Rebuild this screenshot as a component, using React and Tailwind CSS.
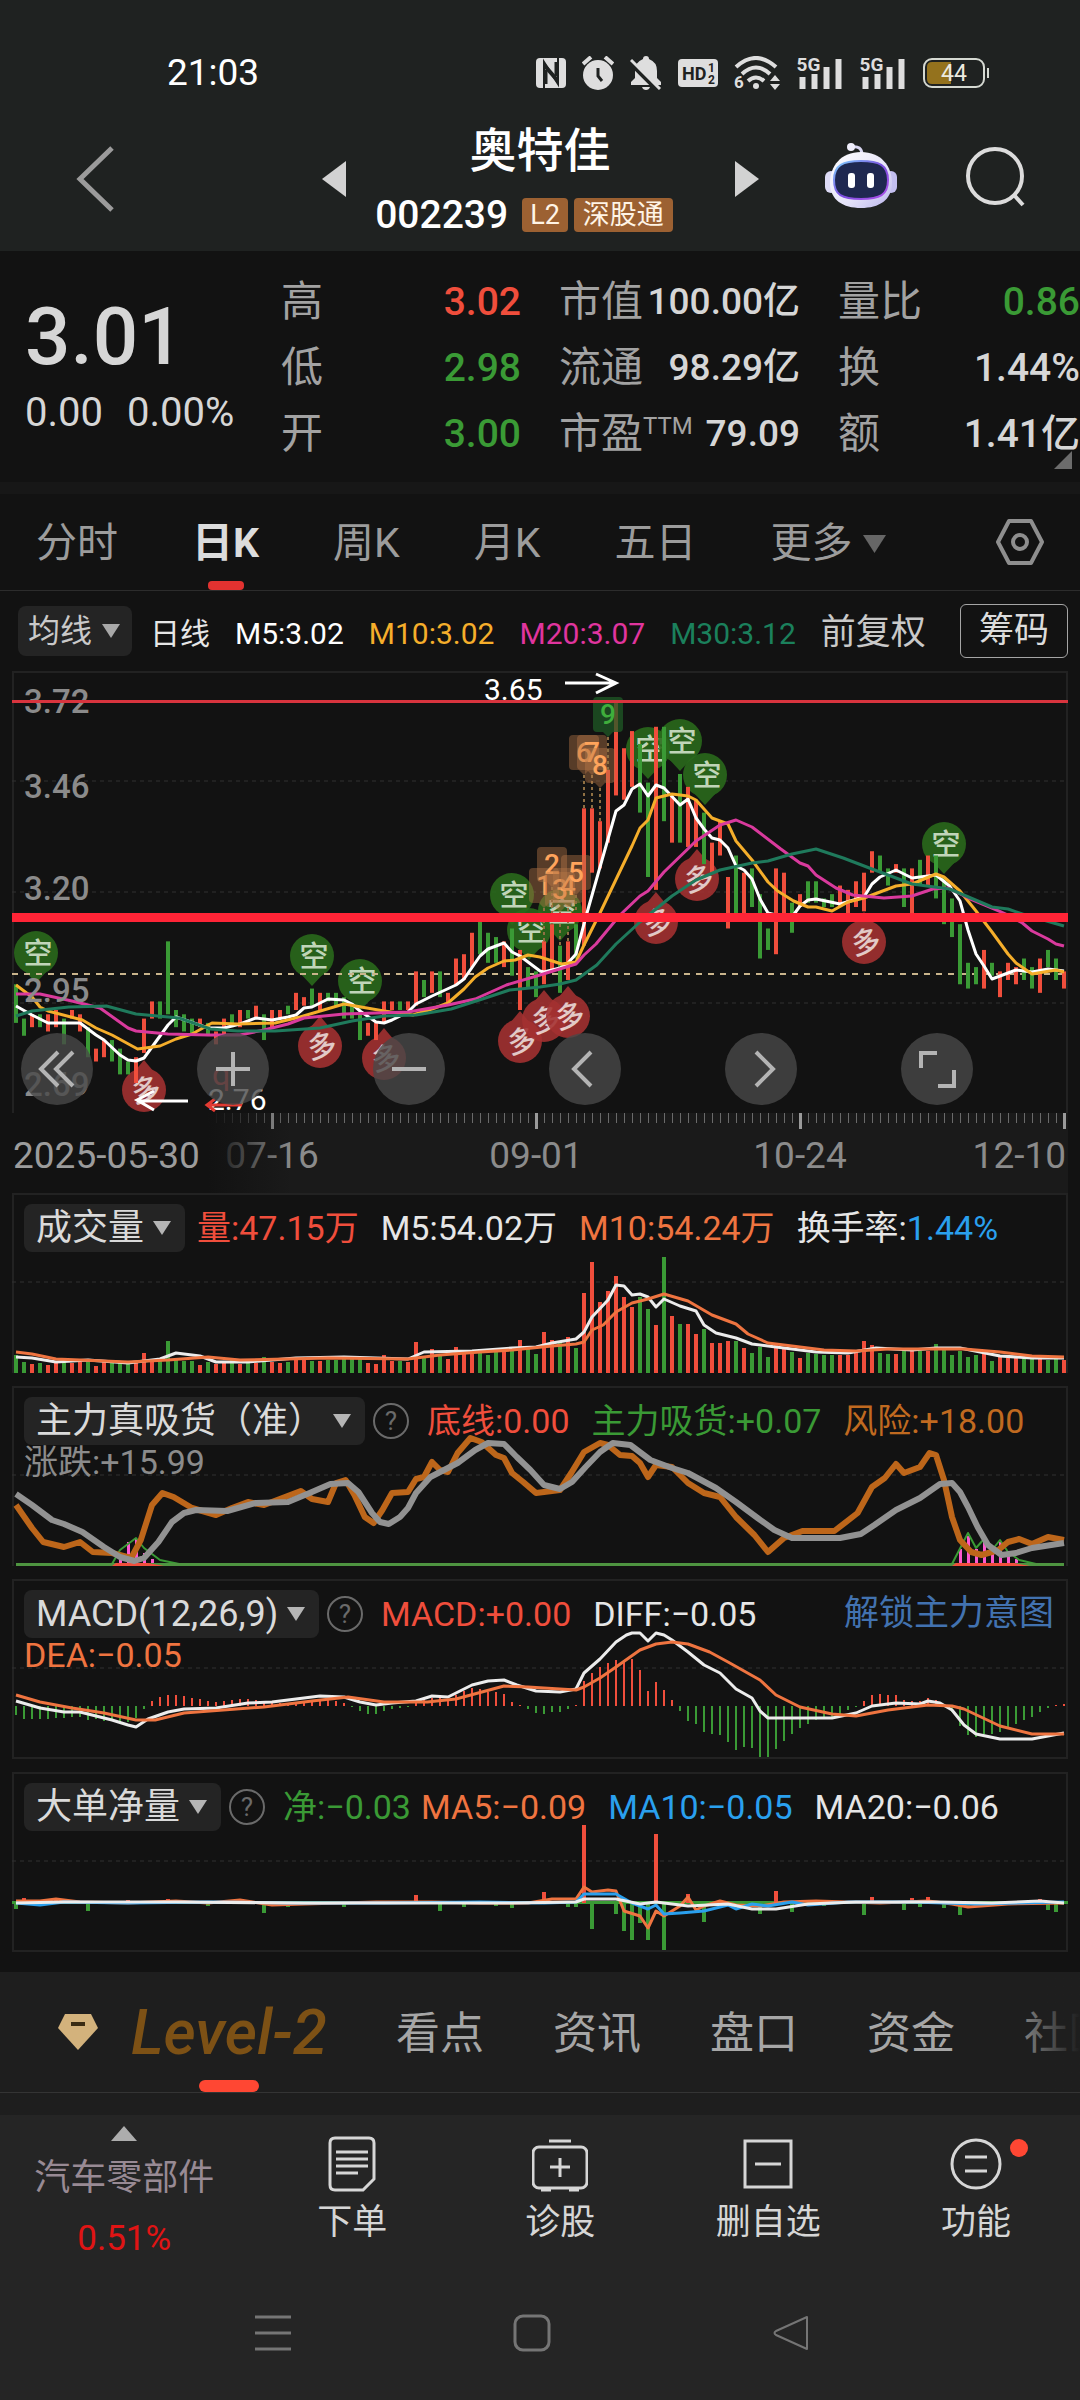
import React, { useState } from 'react';

const RED = '#f04e3c';
const GREEN = '#3a9a35';
const STEP = 8;

// direction, high, low (prices in cents)
const CANDLES = `
g299,290 g291,287 r292,289 g292,289 r292,288 r293,289 g291,285 r293,291 r292,288 g289,282
r284,281 r286,282 g286,281 g284,278 g281,278 r282,276 r291,283 r295,291 g295,291 g309,292
g293,289 g292,288 g291,287 r291,289 g290,287 r288,285 r291,287 g292,289 r293,289 g293,291
r294,291 g292,286 r293,289 r293,291 g294,292 r297,293 r296,294 g298,294 r297,293 g297,295
g297,294 g296,291 g294,291 g292,286 r290,287 r290,286 r295,290 r295,293 g295,293 r295,293
r302,294 g300,296 r302,297 g302,296 r297,294 r305,299 r306,300 r311,303 g315,306 g311,304
g310,304 r309,303 g312,301 r307,293 g303,298 g302,296 r309,299 r313,302 g308,297 r309,300
g313,305 r340,308 r340,325 r337,326 r349,332 r365,343 r354,342 r358,345 g355,339 g346,324
r359,321 g359,337 r343,332 g348,332 r345,331 r342,331 g339,327 r332,325 r337,329 r324,312
g329,315 r325,315 g326,317 g320,305 g312,307 r326,306 r325,315 g318,311 r320,317 g323,318
g323,318 g319,317 g320,317 r322,317 r321,315 r323,317 r325,316 r330,325 g329,325 g326,322
r327,325 g326,317 r326,315 g328,322 r329,322 g329,319 g324,313 g319,310 g313,299 g304,298
g303,299 r307,298 g304,301 r302,296 r304,300 r303,299 g305,300 g303,298 r305,297 g307,303
g305,300 r302,298`.trim().split(/\s+/).map(s => {
    const [high, low] = s.slice(1).split(',').map(Number);
    return { color: s[0] === 'r' ? RED : GREEN, high, low };
});

const VOLUMES = [
    18, 11, 9, 10, 8, 11, 11, 10, 11, 11, 7, 12, 10, 10, 10, 12, 20, 12, 13, 32,
    14, 12, 12, 8, 11, 9, 11, 13, 9, 10, 10, 16, 11, 10, 11, 15, 15, 12, 12, 13,
    13, 14, 15, 14, 10, 9, 18, 12, 12, 11, 31, 15, 24, 19, 14, 26, 23, 22, 20, 18,
    22, 23, 26, 33, 26, 19, 41, 33, 31, 36, 25, 80, 111, 71, 82, 97, 76, 66, 76, 64,
    48, 116, 57, 49, 49, 39, 44, 30, 30, 32, 32, 25, 20, 26, 16, 28, 24, 21, 15, 20,
    19, 18, 18, 18, 18, 23, 32, 28, 20, 19, 19, 22, 22, 22, 22, 29, 25, 18, 22, 16,
    18, 20, 12, 18, 15, 15, 16, 18, 14, 13, 14, 13,
];

const MACD = [
    -9, -13, -13, -13, -13, -12, -12, -11, -11, -14, -13, -15, -15, -17, -16, -12, -3, 5, 9, 11,
    11, 10, 8, 7, 5, 4, 5, 6, 7, 7, 6, 4, 4, 3, 3, 4, 5, 6, 7, 7,
    5, 3, -1, -5, -8, -8, -5, -3, -2, -1, 4, 7, 8, 8, 7, 11, 15, 18, 17, 14,
    14, 12, 4, 1, -3, -7, -8, -6, -6, -3, 1, 25, 33, 39, 43, 46, 46, 47, 36, 15,
    24, 16, 6, -5, -15, -18, -26, -28, -29, -36, -44, -41, -42, -51, -52, -43, -35, -28, -22, -18,
    -14, -12, -12, -8, -4, -1, 5, 11, 12, 11, 11, 6, 5, 5, 8, 6, 0, -6, -20, -29,
    -31, -28, -28, -26, -22, -18, -14, -11, -6, -2, 1, 2,
];

// bar index -> net flow, bars that are not listed stay near zero
const NET = {
    0: -6, 1: 5, 5: 4, 9: -8, 14: 3, 19: 4, 24: -3, 28: 4, 31: -10, 34: -4, 41: -4, 50: 8, 53: -8, 56: -4,
    60: -3, 62: -5, 66: 11, 69: -4, 70: -4, 71: 78, 72: -26, 75: -11, 76: -28, 77: -37, 78: -20, 79: -37,
    80: 69, 81: -48, 84: 9, 86: -19, 88: 3, 93: -11, 95: 12, 97: -9, 101: -3, 106: -12, 107: 6, 111: -7,
    112: 5, 113: -4, 114: 6, 116: -5, 118: -12, 119: -5, 121: -4, 123: -3, 128: 4, 129: -7, 130: -9,
};

const px = i => 4 + STEP * i;
const py = cents => (372 - cents) * 442 / 103;

const Line = ({ pts, color, width = 3 }) => (
    <polyline
        points={pts.trim().split(/\s+/).map(p => {
            const [i, y] = p.split(',').map(Number);
            return `${px(i)},${y}`;
        }).join(' ')}
        fill="none"
        stroke={color}
        strokeWidth={width}
        strokeLinejoin="round"
    />
);

const Grid = ({ y }) => <line x1="0" x2="1056" y1={y} y2={y} stroke="#303030" strokeWidth="1" strokeDasharray="4 4" />;

const Caret = ({ className }) => (
    <svg viewBox="0 0 18 14" className={className} fill="currentColor"><path d="M0 0h18l-9 14z" /></svg>
);

const Pin = ({ x, y, up }) => (
    <g opacity="0.88">
        <circle cx={x} cy={y} r="22" fill={up ? '#a53131' : '#2a6b1c'} />
        <path
            d={up ? `M${x - 10} ${y - 18}L${x} ${y - 30}L${x + 10} ${y - 18}z` : `M${x - 12} ${y + 17}L${x} ${y + 30}L${x + 12} ${y + 17}z`}
            fill={up ? '#a53131' : '#2a6b1c'}
        />
        <text
            x={x + 2}
            y={y + 11}
            fontSize="29"
            fontWeight="500"
            textAnchor="middle"
            fill={up ? '#ffe3e0' : '#d8f0d0'}
            transform={up ? `rotate(-12 ${x} ${y})` : undefined}
        >
            {up ? '多' : '空'}
        </text>
    </g>
);

const SHORT_PINS = [[24, 282], [300, 285], [348, 310], [500, 224], [517, 259], [548, 240], [636, 78], [668, 70], [693, 104], [932, 173]];
const LONG_PINS = [[132, 419], [308, 375], [372, 387], [508, 370], [532, 349], [556, 345], [644, 251], [685, 208], [852, 271]];
// label, bar index, top
const COUNTS = [['1', 66, 197], ['2', 67, 176], ['3', 68, 201], ['4', 69, 197], ['5', 70, 184], ['6', 71, 64], ['7', 72, 64], ['8', 73, 77], ['9', 74, 26]];

const KChart = () => (
    <svg viewBox="0 0 1056 442" className="block w-full">
        <Grid y={110} />
        <Grid y={221} />
        <Grid y={332} />
        {SHORT_PINS.map(([x, y]) => <Pin key={x} x={x} y={y} />)}
        {LONG_PINS.map(([x, y]) => <Pin key={x} x={x} y={y} up />)}
        <line x1="0" x2="1056" y1="303" y2="303" stroke="#c9b48c" strokeWidth="2" strokeDasharray="6 6" />
        {CANDLES.map((c, i) => (
            <rect key={i} x={px(i) - 2} y={py(c.high)} width="4" height={py(c.low) - py(c.high)} fill={c.color} />
        ))}
        {COUNTS.map(([n, i, y]) => (
            <g key={n}>
                <line x1={px(i)} x2={px(i)} y1={y + 40} y2={Math.max(py(CANDLES[i].high), y + 40)} stroke="#8f7043" strokeWidth="2" strokeDasharray="3 3" />
                <path
                    d={`M${px(i) - 11} ${y}h22q4 0 4 4v27q0 4 -4 4h-6l-5 5l-5 -5h-6q-4 0 -4 -4v-27q0 -4 4 -4z`}
                    fill={n === '9' ? '#1f5a25' : '#b87848'}
                    opacity={n === '9' ? 0.75 : 0.42}
                />
                <text x={px(i)} y={y + 27} fontSize="28" fontWeight="500" textAnchor="middle" fill={n === '9' ? '#3fae3c' : '#ffa45c'}>{n}</text>
            </g>
        ))}
        <Line color="#ffffff" pts="0,335 2,344 4,352 8,352 10,364 11,369 13,384 14,389 15,390 16,387 17,376 19,354 20,346 21.5,350 24,357 26,357 28,353 30,347 32,349 34,346 35,344 36,337 37,336 39,328 41,329 42,333 43,340 45,351 46,352 47,349 49,341 50,333 52,325 55,314 56,308 58,285 59,278 61,272 62,281 63,285 65.5,300 66,301 67,299 68,297 69,292 70,283 71.3,244 73,196 75,140 76,134 77,118 78,113 79,125 80,114 81,117 83,134 84,128 85,147 86,158 87,167 88,169 89,177 90,195 91,199 92,208 93,228 94,242 95,244 97,246 98,235 99,229 100,228 103,233 106,226 107,213 108,206 110,199 112,207 115,204 116.7,215 118,230 119,259 120,283 121,295 122,308 125,299 127,301 129,298 131,300" />
        <Line color="#f5ae2b" pts="0,314 2,326 3,336 4,340 8.3,349 10,357 12,364 15.2,378 18,375 20,368 22,363 24.5,352 27.7,353 32.4,352 35.5,346 41,333 46,340 49.6,344 52,338 54,332 56,318 57.4,306 59,297 61,290 62.4,289 64,284 65.5,286 68.2,293 70,291 71,274 73,242 77,175 78,157 79,149 80,127 82,123 84,125 85,129 87,147 89,153 90,170 92,189 94,211 95.2,220 97.2,230 99,236 100,236 102,240 104,231 106,227 110,215 112,213 115,203 116,206 118,220 120,240 122,261 124,283 125,292 127,303 130,299 131,301" />
        <Line color="#d93a9d" pts="0,323 3,323 7,330 10.5,337 14,357 15,360 19,363 24,364 28,364 31,359 34,353 36,347 41,343 49,341 54,334 57.4,328 61.3,314 65.5,304 70,293 71,284 72.5,273 75.5,244 78,225 79,220 81,201 85,170 88,154 90,149 92,156 95.6,178 98,192 99,195 100,204 102.5,217 104.6,224 108.5,227 112,225 114.6,218 116.5,217 119.3,228 122,237 124,244 125.8,252 127,260 129,268 130,273 131,275" />
        <Line color="#1f7a5c" pts="0,345 2,340 6.6,336 11.3,335 15,343 20.4,347 24.3,358 27.7,360 32.4,360 38,357 42,350 46,345 50,344 54.4,338 58.3,328 61.7,319 65.5,316 68,313 70,309 72.6,294 75,273 78,251 82,225 85,209 88,199 92,192 94,190 97,183 100,178 103.4,187 107,198 110,207 112,213 116.7,218 122,236 124,238 125.8,243 131,255" />
        <g fill="#8b8b8b" fontSize="33" fontWeight="500">
            <text x="12" y="42">3.72</text>
            <text x="12" y="127">3.46</text>
            <text x="12" y="229">3.20</text>
            <text x="12" y="331">2.95</text>
            <text x="12" y="425">2.69</text>
        </g>
        <text x="472" y="29" fontSize="30" fill="#fff">3.65</text>
        <path d="M553 12H603M584 3l20 9l-20 10" fill="none" stroke="#fff" strokeWidth="3" />
        <text x="196" y="439" fontSize="30" fill="#fff">2.76</text>
        <text x="200" y="414" fontSize="32" fill="#d03030">q</text>
        <path d="M176 430H126M142 420l-17 9l17 10" fill="none" stroke="#fff" strokeWidth="3" />
        <path d="M230 434H196M203 428l-8 6l8 6" fill="none" stroke="#e23b33" strokeWidth="3" />
        <rect x="0" y="29" width="1056" height="3" fill="#d8343e" />
        <rect x="0" y="242" width="1056" height="9" fill="#ff2436" />
    </svg>
);

const CONTROLS = [
    ['快退', 'M35 17L18 34L35 51M50 17L33 34L50 51'],
    ['放大', 'M17 34H51M34 17V51'],
    ['缩小', 'M17 34H51'],
    ['左移', 'M40 17L23 34L40 51'],
    ['右移', 'M29 17L46 34L29 51'],
    ['全屏', 'M18 33V18H34M51 35V51H35'],
];

const TimeAxis = () => (
    <svg viewBox="0 0 1056 80" className="block w-full bg-[#1a1a1a]">
        <defs>
            <linearGradient id="fade">
                <stop offset="0.7" stopColor="#121212" />
                <stop offset="1" stopColor="#121212" stopOpacity="0" />
            </linearGradient>
        </defs>
        {CANDLES.map((_, i) => (
            i % 33 === 32
                ? <rect key={i} x={px(i) - 1} y="0" width="3" height="16" fill="#9a9a9a" />
                : <rect key={i} x={px(i)} y="0" width="1" height="10" fill="#6a6a6a" />
        ))}
        <g fill="#8b8b8b" fontSize="37">
            <text x="260" y="55" textAnchor="middle">07-16</text>
            <text x="524" y="55" textAnchor="middle">09-01</text>
            <text x="788" y="55" textAnchor="middle">10-24</text>
            <text x="1054" y="55" textAnchor="end">12-10</text>
        </g>
        <rect x="0" y="0" width="280" height="80" fill="url(#fade)" />
        <text x="1" y="55" fontSize="37" fill="#9c9c9c">2025-05-30</text>
    </svg>
);

const Picker = ({ label, value }) => (
    <label className="relative flex shrink-0 items-center rounded-lg bg-[#242424] text-[#dadada]">
        <span className="sr-only">{label}</span>
        <select className="h-12 appearance-none bg-transparent pl-3 pr-10 text-[36px] leading-[48px] outline-none">
            <option>{value}</option>
        </select>
        <Caret className="pointer-events-none absolute right-[14px] h-[14px] w-[18px] text-[#b5b5b5]" />
    </label>
);

const Help = () => (
    <button aria-label="指标说明" className="ml-2 h-9 w-9 shrink-0 rounded-full border-2 border-[#6a6a6a] text-[26px] leading-8 text-[#6a6a6a]">?</button>
);

const Panel = ({ label, value, help, items, extra, link, children }) => (
    <section className="relative mb-[13px] h-[180px] border-x-2 border-t-2 border-[#222]">
        <div className="absolute -inset-x-[2px] -top-[2px]">
            <svg viewBox="0 0 1056 180" className="block w-full">
                <Grid y={89} />
                {children}
            </svg>
        </div>
        <div className="relative flex items-center whitespace-nowrap pl-[10px] pr-3 pt-[9px] text-[34px] leading-[48px]">
            <Picker label={label} value={value} />
            {help && <Help />}
            <div className={help ? 'ml-[18px] flex gap-[22px]' : 'ml-3 flex gap-[22px]'}>
                {items}
            </div>
            {link && <a href="#unlock" className="ml-auto text-[35px] text-[#4272b0]">{link}</a>}
        </div>
        {extra && <div className="relative pl-[10px] text-[34px] leading-[34px]">{extra}</div>}
    </section>
);

const StatusIcons = () => (
    <div className="flex items-center gap-4 text-[#dedede]">
        <svg viewBox="0 0 30 30" className="h-[30px] w-[30px]">
            <rect width="30" height="30" rx="4" fill="currentColor" />
            <path d="M8 30V4L22 26V0" fill="none" stroke="#1f2221" strokeWidth="2" />
            <path d="M8 4L22 20V26L8 10z" fill="#1f2221" />
            <path d="M10 12V26M20 4V18" stroke="#1f2221" strokeWidth="3" />
        </svg>
        <svg viewBox="0 0 32 34" className="h-[34px] w-8" fill="none" stroke="currentColor">
            <circle cx="16" cy="19" r="15" fill="currentColor" stroke="none" />
            <path d="M1 8L9 1M31 8L23 1" strokeWidth="4" />
            <path d="M16 12V20L20 25" stroke="#1f2221" strokeWidth="3" />
        </svg>
        <svg viewBox="0 0 32 34" className="h-[34px] w-8" fill="currentColor">
            <path d="M16 0q3 0 3 3q8 3 8 12v7l4 4v3H1v-3l4-4v-7q0-9 8-12q0-3 3-3zM12 31h8q-1 3-4 3t-4-3z" />
            <path d="M-1 6L28 35" stroke="#1f2221" strokeWidth="4" />
            <path d="M1 4L30 33" stroke="currentColor" strokeWidth="3" />
        </svg>
        <svg viewBox="0 0 40 28" className="h-7 w-10">
            <rect width="40" height="28" rx="4" fill="currentColor" />
            <g fill="#1f2221" fontWeight="700">
                <text x="4" y="21" fontSize="18">HD</text>
                <text x="30" y="13" fontSize="12">1</text>
                <text x="30" y="25" fontSize="12">2</text>
            </g>
        </svg>
        <svg viewBox="0 0 46 34" className="h-[34px] w-[46px]" fill="none" stroke="currentColor" strokeWidth="4">
            <path d="M2 11q20-18 40 0M8 18q14-13 28 0M14 25q8-7 16 0" />
            <circle cx="22" cy="30" r="3" fill="currentColor" stroke="none" />
            <path d="M41 19l5 6h-10zM41 34l5-6h-10z" fill="currentColor" stroke="none" />
            <text x="0" y="32" fontSize="17" fontWeight="700" fill="currentColor" stroke="none">6</text>
        </svg>
        {[0, 1].map(k => (
            <svg key={k} viewBox="0 0 46 34" className="h-[34px] w-[47px] overflow-visible" fill="currentColor">
                <text x="0" y="15" fontSize="19" fontWeight="700">5G</text>
                <path d="M3 21h6v12h-6zM15 18h6v15h-6zM27 11h6v22h-6zM39 3h6v30h-6z" />
            </svg>
        ))}
        <svg viewBox="0 0 68 32" className="h-8 w-[68px]">
            <rect x="2" y="2" width="60" height="28" rx="8" fill="none" stroke="#d5d9d2" strokeWidth="2" />
            <path d="M10 5H29V27H10q-5 0-5-5V10q0-5 5-5z" fill="#94721d" />
            <path d="M66 11V21" stroke="#d5d9d2" strokeWidth="2" />
            <text x="32" y="24" fontSize="23" textAnchor="middle" fill="#ecebe0">44</text>
        </svg>
    </div>
);

const Robot = () => (
    <svg viewBox="0 0 72 68" className="h-[68px] w-[72px]">
        <defs>
            <linearGradient id="shell" x1="0" y1="0" x2="1" y2="1">
                <stop offset="0" stopColor="#ffffff" />
                <stop offset="0.6" stopColor="#e4e2f8" />
                <stop offset="1" stopColor="#b9b4ec" />
            </linearGradient>
            <linearGradient id="rim" x1="0" y1="0" x2="1" y2="1">
                <stop offset="0" stopColor="#7fd4ff" />
                <stop offset="0.5" stopColor="#7a4fe0" />
                <stop offset="1" stopColor="#b04fe8" />
            </linearGradient>
        </defs>
        <path d="M26 5Q37 3 37 13" fill="none" stroke="#d9d7f2" strokeWidth="3" />
        <circle cx="26" cy="5" r="4" fill="#f0effc" />
        <rect x="0" y="29" width="12" height="22" rx="6" fill="#dddbf6" />
        <rect x="60" y="29" width="12" height="22" rx="6" fill="#c3bff0" />
        <path d="M36 10C56 10 67 24 67 41C67 58 54 66 36 66S5 58 5 41C5 24 16 10 36 10z" fill="url(#shell)" />
        <path d="M36 19C54 19 63 23 63 38C63 53 55 57 36 57S9 53 9 38C9 23 18 19 36 19z" fill="#1f2850" stroke="url(#rim)" strokeWidth="2" />
        <rect x="23" y="31" width="7" height="15" rx="3" fill="#fff" />
        <rect x="42" y="31" width="7" height="15" rx="3" fill="#fff" />
    </svg>
);

const STATS = [
    [['高', '3.02', 'text-[#f04e3c]'], ['低', '2.98', 'text-[#3a9a35]'], ['开', '3.00', 'text-[#3a9a35]']],
    [['市值', '100.00亿', 'text-[#d6d6d6]'], ['流通', '98.29亿', 'text-[#d6d6d6]'], ['市盈', '79.09', 'text-[#d6d6d6]']],
    [['量比', '0.86', 'text-[#3a9a35]'], ['换', '1.44%', 'text-[#d6d6d6]'], ['额', '1.41亿', 'text-[#d6d6d6]']],
];

const FOOTER = [
    ['下单', <path key="a" d="M9 2H43Q48 2 48 7V43L37 54H9Q4 54 4 49V7Q4 2 9 2zM10 16H42M10 23H42M10 30H42M10 37H32" />],
    ['诊股', (
        <g key="b">
            <rect x="-1" y="11" width="54" height="41" rx="6" />
            <path d="M15 5H37M26 22V41M16 31H36M7 54H17M35 54H45" />
        </g>
    )],
    ['删自选', <path key="c" d="M3 5H49V51H3zM13 28H39" />],
    ['功能', (
        <g key="d">
            <circle cx="26" cy="28" r="24" />
            <path d="M15 21H37M15 35H37" />
        </g>
    )],
];

const App = () => {
    const [period, setPeriod] = useState('日K');
    const [section, setSection] = useState('Level-2');

    return (
        <div className="min-h-screen w-full overflow-hidden bg-[#121212] font-[family-name:Roboto,'Noto_Sans_CJK_SC',sans-serif] text-[#d6d6d6]">
            <header className="bg-[#1f2221] pt-[55px]">
                <div className="flex h-9 items-center justify-between pl-[167px] pr-[90px]">
                    <span className="text-[37px] leading-9 text-white">21:03</span>
                    <StatusIcons />
                </div>
                <div className="grid h-40 grid-cols-[1fr_437px_1fr] items-center">
                    <div className="pl-[75px] pt-4">
                        <button aria-label="返回" className="block">
                            <svg viewBox="0 0 40 66" className="h-[66px] w-10" fill="none" stroke="#9b9b9b" strokeWidth="5"><path d="M37 2L5 33L37 64" /></svg>
                        </button>
                    </div>
                    <div className="flex items-center justify-between pt-4">
                        <button aria-label="上一只"><svg viewBox="0 0 24 36" className="h-9 w-6" fill="#d2d2d2"><path d="M24 0V36L0 18z" /></svg></button>
                        <div className="flex flex-col items-center">
                            <h1 className="text-[47px] font-medium leading-[56px] text-white">奥特佳</h1>
                            <div className="mt-4 flex items-center gap-[6px] pr-8">
                                <span className="mr-2 text-[39px] font-medium leading-[40px] text-white">002239</span>
                                <span className="rounded bg-[#9c6132] px-2 text-[27px] leading-[34px] text-[#fff4e6]">L2</span>
                                <span className="rounded bg-[#9c6132] px-[9px] text-[27px] leading-[34px] text-[#fff4e6]">深股通</span>
                            </div>
                        </div>
                        <button aria-label="下一只"><svg viewBox="0 0 24 36" className="h-9 w-6" fill="#d2d2d2"><path d="M0 0V36L24 18z" /></svg></button>
                    </div>
                    <div className="flex items-center justify-end gap-[68px] pr-[53px] pt-[10px]">
                        <button aria-label="智能助手"><Robot /></button>
                        <button aria-label="搜索">
                            <svg viewBox="0 0 62 62" className="h-[62px] w-[62px]" fill="none" stroke="#dcdcdc" strokeWidth="4"><circle cx="30" cy="31" r="27" /><path d="M49 50L58 60" /></svg>
                        </button>
                    </div>
                </div>
            </header>

            {/* Quote */}
            <section className="relative grid h-[231px] grid-cols-[281fr_278fr_279fr_242fr] pt-[18px]">
                <div className="pl-[25px] pt-[26px]">
                    <div className="text-[80px] font-medium leading-[84px]">3.01</div>
                    <div className="mt-3 flex gap-6 whitespace-nowrap text-[40px] leading-[44px]">
                        <span>0.00</span>
                        <span>0.00%</span>
                    </div>
                </div>
                {STATS.map((col, c) => (
                    <dl key={c} className={c === 2 ? '' : 'pr-[38px]'}>
                        {col.map(([name, value, tone]) => (
                            <div key={name} className="flex h-[66px] items-center justify-between whitespace-nowrap">
                                <dt className="text-[42px] leading-[48px] text-[#a2a2a2]">
                                    {name}
                                    {name === '市盈' && <sup className="top-[-14px] text-[24px] leading-none">TTM</sup>}
                                </dt>
                                <dd className={`${c === 1 ? 'text-[37px]' : 'text-[39px]'} font-medium leading-[48px] ${tone}`}>{value}</dd>
                            </div>
                        ))}
                    </dl>
                ))}
                <svg viewBox="0 0 18 18" className="absolute bottom-[13px] right-2 h-[18px] w-[18px]"><path d="M18 0V18H0z" fill="#6c6c6c" /></svg>
            </section>
            <div className="h-3 bg-[#171717]" />

            {/* Period tabs */}
            <nav className="flex h-[97px] items-center gap-[74px] border-b border-[#2c2c2c] pl-9 pr-[35px] text-[41px] text-[#9c9c9c]">
                {['分时', '日K', '周K', '月K', '五日'].map(p => (
                    <button
                        key={p}
                        onClick={() => setPeriod(p)}
                        className={`relative h-24 whitespace-nowrap pt-1 ${period === p ? 'font-bold text-[#dcdcdc]' : ''}`}
                    >
                        {p}
                        {period === p && <span className="absolute bottom-0 left-1/2 h-[9px] w-9 -translate-x-1/2 rounded bg-[#e23230]" />}
                    </button>
                ))}
                <button className="flex items-center gap-[10px] whitespace-nowrap pt-1">更多<Caret className="h-[18px] w-[23px] text-[#666]" /></button>
                <button aria-label="设置" className="ml-auto">
                    <svg viewBox="0 0 50 48" className="h-12 w-[50px]" fill="none" stroke="#8e8e8e" strokeWidth="4"><path d="M14 3H36L47 24L36 45H14L3 24z" strokeLinejoin="round" /><circle cx="25" cy="24" r="7" /></svg>
                </button>
            </nav>

            <div className="flex h-20 items-center whitespace-nowrap pl-[18px] pr-3 text-[30px]">
                <label className="relative flex items-center rounded-lg bg-[#242424] text-[#c9c9c9]">
                    <span className="sr-only">主图指标</span>
                    <select className="h-[50px] appearance-none bg-transparent pl-[10px] pr-[39px] text-[32px] outline-none"><option>均线</option></select>
                    <Caret className="pointer-events-none absolute right-3 h-[14px] w-[18px] text-[#a8a8a8]" />
                </label>
                <div className="ml-[18px] flex items-center gap-[25px] pt-1">
                    <span className="text-[#e6e6e6]">日线</span>
                    <span className="text-white">M5:3.02</span>
                    <span className="text-[#f5ae2b]">M10:3.02</span>
                    <span className="text-[#e0359f]">M20:3.07</span>
                    <span className="text-[#1b805c]">M30:3.12</span>
                    <button className="text-[35px] leading-10 text-[#c9c9c9]">前复权</button>
                </div>
                <button className="ml-auto h-[54px] rounded-md border border-[#a5a5a5] px-[18px] text-[35px] leading-[50px] text-[#dcdcdc]">筹码</button>
            </div>

            <main className="px-3">
                <div className="relative">
                    <div className="border-x-2 border-t-2 border-[#222]">
                        <div className="-mx-[2px] -mt-[2px]"><KChart /></div>
                    </div>
                    <div className="absolute inset-x-0 bottom-2 flex">
                        {CONTROLS.map(([name, d]) => (
                            <div key={name} className="w-1/6 pl-[9px]">
                                <button aria-label={name} className="flex h-[72px] w-[72px] items-center justify-center rounded-full bg-[#484848]/80">
                                    <svg viewBox="0 0 68 68" className="h-[68px] w-[68px]" fill="none" stroke="#b4b4b4" strokeWidth="4"><path d={d} /></svg>
                                </button>
                            </div>
                        ))}
                    </div>
                </div>
                <TimeAxis />

                <Panel
                    label="指标一"
                    value="成交量"
                    items={<>
                        <span className="text-[#f04e3c]">量:47.15万</span>
                        <span className="text-[#e6e6e6]">M5:54.02万</span>
                        <span className="text-[#ef7440]">M10:54.24万</span>
                        <span className="text-[#e6e6e6]">换手率:<span className="text-[#2aa0ee]">1.44%</span></span>
                    </>}
                >
                    {VOLUMES.map((v, i) => <rect key={i} x={px(i) - 2} y={180 - v} width="4" height={v} fill={CANDLES[i].color} />)}
                    <Line color="#ececec" pts="0,164 2,165 5,169 9,167 14,170 18,166 20,160 23,163 25,169 29,169 35,165 41,164 49,166 51,159 57,158 62,155 65,154 67,150 70,146 71,139 72,124 74,107 75,92 76,93 77,102 78,101 79,104 80,114 81,106 83,113 85,118 86,132 87.5,140 90,145 92,151 96,155 100,159 104,160 107.5,155 112,157 115,155 118,155 123,163 127,165 131,165" />
                    <Line color="#ef7440" pts="0,159 2,161 5,166 14,169 19,167 24,164 28,167 39,165 49,166 53,162 58,159 62,157 67,153 70,151 71,149 72,137 73.4,132 75,119 77,110 79,106 81,101 84,108 87,122 90,131 91.5,141 94,150 98,154 101,157 105,158 109,156 114,156 118.5,156 123,159 127,163 131,164" />
                </Panel>

                <Panel
                    label="指标二"
                    value="主力真吸货（准）"
                    help
                    items={<>
                        <span className="text-[#f04e3c]">底线:0.00</span>
                        <span className="text-[#3a9a35]">主力吸货:+0.07</span>
                        <span className="text-[#c06a20]">风险:+18.00</span>
                    </>}
                    extra={<span className="text-[#8b8b8b]">涨跌:+15.99</span>}
                >
                    {[[13, 12], [14, 23], [15, 26], [16, 12], [17, 6], [118, 16], [119, 29], [120, 16], [121, 25], [122, 14], [123, 23], [124, 12], [125, 6]].map(([i, h]) => (
                        <rect key={i} x={px(i) - 1} y={179 - h} width="3" height={h} fill="#ff57cf" />
                    ))}
                    <Line width={2} color={GREEN} pts="12,178 13,164 15,152 16,162 18,174 20.4,178" />
                    <Line width={2} color={GREEN} pts="117,178 119,147 120,162 121,153 122,164 123,154 124,166 125.4,174 127.5,178" />
                    <rect x="4" y="177" width="1048" height="3" fill="#4e9440" />
                    <path d="M100 180l4-3h32l16 3zM940 180l4-3h58l16 3z" fill={RED} />
                    <Line width={6} color="#bd661a" pts="0,119 2,142 3.4,156 6,161 8,156 9.6,166 12,167 14.4,172 15.6,154 17,119 18.3,107 19.7,111 22,122 25,129 27,122 29,116 31,119 35.6,105 37,113 39,116 40,97 41.2,94 42.3,109 43.6,131 44.7,137 45.8,124 47,107 49,106 50,93 51,91 52,76 53,84 54,86 55.2,67 56.8,52 58.2,56 60,69 61,72 62,87 63.4,96 65,107 68,104 69.4,87 71,66 73,57 74,59 75.5,69 77,70 78,77 79,91 80,79 82,81 84,97 86,107 88,111 90,131 92.3,149 94,166 96,152 98.3,145 102.3,145 105.2,127 107,101 108.6,92 110,78 111,87 113,81 114.2,67 115,69 116,94 117,131 118,154 119.4,166 120.7,169 122.8,164 124,156 125.4,153 127,158 129,151 131,154" />
                    <Line width={6} color="#929292" pts="0,108 2,119 4.5,134 6,138 8.3,146 11,161 13,171 14.8,175 16,172 17.8,156 19.5,136 21,127 22.5,124 26.4,125 30,117 34,116 36.7,107 39.3,98 41.5,97 42.8,106 44.5,127 45.5,136 46.6,138 48,131 49,122 50,107 51.8,91 55.2,77 57.4,64 59,57 61,58 62.6,71 64.3,84 66,99 68,103 69.5,96 71.2,81 73,66 74.6,57 76.8,59 79.3,74 82,82 84,87 87.5,102 90,116 92.7,132 94.8,144 97,152 103,152 105.6,148 107.3,139 110,124 113,112 115.5,98 117,97 118,106 119,121 120.2,141 121.5,159 123.2,169 125,167 127,162 131,157" />
                </Panel>

                <Panel
                    label="指标三"
                    value="MACD(12,26,9)"
                    help
                    items={<>
                        <span className="text-[#f04e3c]">MACD:+0.00</span>
                        <span className="text-[#e6e6e6]">DIFF:−0.05</span>
                    </>}
                    link="解锁主力意图"
                    extra={<span className="text-[#ef7440]">DEA:−0.05</span>}
                >
                    {MACD.map((v, i) => (
                        <rect key={i} x={px(i) - 1} y={v > 0 ? 127 - v : 127} width="2" height={Math.abs(v)} fill={v > 0 ? RED : GREEN} />
                    ))}
                    <Line color="#ececec" pts="0,122 3,129 6,133 8,133 12,141 14,146 15,148 16.5,140 19,133 21,130 25,129 29,124 32,123 38,117 41,118 43,123 45,126 47,124 50,122 52,117 54,118 57,106 59,102 61,101 62.6,106 65,112 68,113 70,110 71,94 73,80 75,63 76.3,56 77,54 78,54 79,62 80,54 81,56 82,61 84,73 86,86 88,94 90,110 92,119 93,132 94,139 102,139 105,134 107,127 110,124 113,125 114,122 115.5,124 117,131 118.5,146 120,155 123,160 127,160 129,157 131,154" />
                    <Line color="#ef7440" pts="0,116 3,123 7,129 11,134 15,141 17.4,141 21,134 31,128 37,122 41.5,118 46,123 51.4,123 55,120 61,107 64,108 70,111 71,108 73,99 75,88 78,71 80,65 82,63 84,65 86.7,73 89,83 93,101 95,116 98,128 102,135 105,137 109,131 114,126 117,127 118.5,130 123,147 127,155 131,155" />
                    <rect x="0" y="178" width="1056" height="2" fill="#222" />
                </Panel>

                <Panel
                    label="指标四"
                    value="大单净量"
                    help
                    items={<>
                        <span className="-mr-3 text-[#3a9a35]">净:−0.03</span>
                        <span className="text-[#ef7440]">MA5:−0.09</span>
                        <span className="text-[#2aa0ee]">MA10:−0.05</span>
                        <span className="text-[#e6e6e6]">MA20:−0.06</span>
                    </>}
                >
                    <rect x="0" y="129" width="1056" height="3" fill={GREEN} />
                    {Object.entries(NET).map(([i, v]) => (
                        <rect key={i} x={px(Number(i)) - 2} y={v > 0 ? 131 - v : 131} width="4" height={Math.abs(v)} fill={v > 0 ? RED : GREEN} />
                    ))}
                    <Line color="#ef7440" pts="0,129 3,129 5,127 8,130 14,131 20,129 24,131 28,128 32,133 36,132 45,130 52,130 58,131 64,131 67,127 70,127 71,115 72,120 74,118 75,119 76,139 78,144 79,156 80,139 81,144 83,134 84,125 85,138 86,134 88,129 90,133 93,134 96,130 100,129 108,131 114,129 117,132 119,135 124,132 131,131" />
                    <Line color="#2aa0ee" pts="0,131 3,133 6,130 14,131 24,130 34,131 46,131 58,130 66,131 70,130 71,122 75,122 77,131 79,137 80,133 81,142 83,141 86,139 89,133 90,137 92,132 94,134 97,130 99,133 104,130 112,130 120,132 131,130" />
                    <Line color="#ececec" pts="0,131 6,130 20,130 36,131 50,131 62,131 70,130 71,127 75,127 78,132 80,130 84,134 89,132 92,137 95,137 99,132 105,130 115,130 122,131 128,129 131,131" />
                    <rect x="0" y="178" width="1056" height="2" fill="#222" />
                </Panel>
            </main>

            {/* Sections */}
            <nav className="relative mt-5 flex h-[121px] items-center gap-[69px] overflow-hidden whitespace-nowrap border-b border-[#343434] bg-[#1e1e1e] pl-[57px] text-[44px] text-[#a6a6a6]">
                <button onClick={() => setSection('Level-2')} className="flex h-full shrink-0 items-center gap-8">
                    <svg viewBox="0 0 42 38" className="h-[38px] w-[42px]"><path d="M8 1H34L41 15L21 37L1 15z" fill="#d3b27c" strokeLinejoin="round" /><path d="M14 11H28" stroke="#3a2c14" strokeWidth="4" /></svg>
                    <span className="relative flex h-full items-center text-[62px] font-medium italic text-[#7d5115]">
                        Level-2
                        {section === 'Level-2' && <span className="absolute bottom-0 left-1/2 h-3 w-[60px] -translate-x-1/2 rounded-md bg-[#ff4733]" />}
                    </span>
                </button>
                {['看点', '资讯', '盘口', '资金', '社区'].map(s => (
                    <button key={s} onClick={() => setSection(s)} className="relative h-full shrink-0 pt-1">
                        {s}
                        {section === s && <span className="absolute bottom-0 left-1/2 h-3 w-[60px] -translate-x-1/2 rounded-md bg-[#ff4733]" />}
                    </button>
                ))}
                <span className="pointer-events-none absolute right-0 top-0 h-full w-20 bg-linear-to-r from-transparent to-[#1e1e1e]" />
            </nav>
            <div className="h-[22px] bg-[#1e1e1e]" />

            <footer className="min-h-[285px] bg-[#252525]">
                <div className="flex h-[170px]">
                    <button className="flex w-[23%] flex-col items-center pt-[11px]">
                        <svg viewBox="0 0 26 15" className="h-[15px] w-[26px]" fill="#adadad"><path d="M13 0L26 15H0z" /></svg>
                        <span className="mt-[14px] text-[36px] leading-[46px] text-[#988a94]">汽车零部件</span>
                        <span className="mt-4 text-[35px] leading-[44px] text-[#e01414]">0.51%</span>
                    </button>
                    {FOOTER.map(([name, icon]) => (
                        <button key={name} className="relative flex flex-1 flex-col items-center pt-[21px] text-[#d6d6d6]">
                            <svg viewBox="-2 0 56 56" className="h-14 w-14" fill="none" stroke="currentColor" strokeWidth="3">{icon}</svg>
                            <span className="mt-2 text-[35px] leading-[46px]">{name}</span>
                            {name === '功能' && <span className="absolute left-1/2 top-6 ml-[34px] h-[18px] w-[18px] rounded-full bg-[#ff4733]" />}
                        </button>
                    ))}
                </div>
                <div className="flex justify-between pl-[23.5%] pr-[25%] pt-[29px]">
                    <button aria-label="菜单"><svg viewBox="0 0 38 38" className="h-[38px] w-[38px]" fill="none" stroke="#757575" strokeWidth="3"><path d="M1 3H37M1 19H37M1 35H37" /></svg></button>
                    <button aria-label="主页"><svg viewBox="0 0 38 38" className="h-[38px] w-[38px]" fill="none" stroke="#757575" strokeWidth="3"><rect x="2" y="2" width="34" height="34" rx="8" /></svg></button>
                    <button aria-label="后退"><svg viewBox="0 0 38 38" className="h-[38px] w-[38px]" fill="none" stroke="#757575" strokeWidth="2"><path d="M35 3V35L4 21Q1 19 4 17z" strokeLinejoin="round" /></svg></button>
                </div>
            </footer>
        </div>
    );
};

export default App;
